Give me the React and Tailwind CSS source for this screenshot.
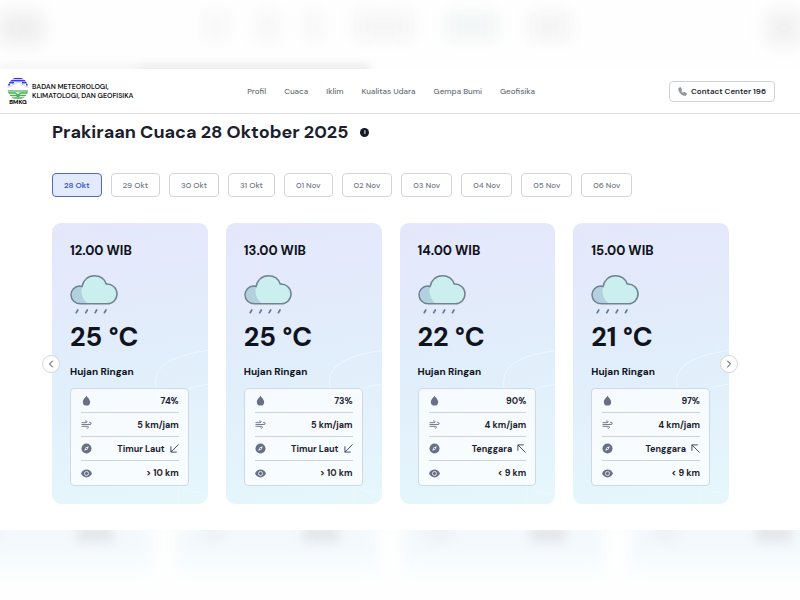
import { useState } from "react";
import { ChevronLeft, ChevronRight, Wind } from "lucide-react";

const NAV = ["Profil", "Cuaca", "Iklim", "Kualitas Udara", "Gempa Bumi", "Geofisika"];
const DAYS = ["28 Okt", "29 Okt", "30 Okt", "31 Okt", "01 Nov", "02 Nov", "03 Nov", "04 Nov", "05 Nov", "06 Nov"];
const HOURS = [
  { time: "12.00", temp: 25, humidity: "74%", wind: "5 km/jam", from: "Timur Laut", arrow: "sw", sight: "> 10 km" },
  { time: "13.00", temp: 25, humidity: "73%", wind: "5 km/jam", from: "Timur Laut", arrow: "sw", sight: "> 10 km" },
  { time: "14.00", temp: 22, humidity: "90%", wind: "4 km/jam", from: "Tenggara", arrow: "nw", sight: "< 9 km" },
  { time: "15.00", temp: 21, humidity: "97%", wind: "4 km/jam", from: "Tenggara", arrow: "nw", sight: "< 9 km" },
];

function Logo() {
  return (
    <div className="flex w-[22px] flex-col items-center">
      <svg viewBox="0 0 22 23" className="h-[23px] w-[22px]" aria-hidden="true">
        <defs>
          <clipPath id="globe"><ellipse cx="11" cy="11.500" rx="10.500" ry="11" /></clipPath>
        </defs>
        <g clipPath="url(#globe)">
          <rect width="22" height="23" fill="#fff" />
          <path d="M5 1.500h12M3 3.700h16M1 5.800h6M15 5.800h6M0 7.800h3M19 7.800h3" stroke="#3a3ae0" strokeWidth="1.400" />
          <path d="M0 10.500C5 10 7 5.500 11 5.500S17 10 22 10.500" fill="none" stroke="#c5c9f5" />
          <path d="M0 13h22v2.500H0z" fill="#8fce97" />
          <path d="M0 16h8l3 2 3-2h8M2 18.500h7l2 1 2-1h7M4 21h14" fill="none" stroke="#4fae5c" strokeWidth="1.400" />
        </g>
      </svg>
      <span className="text-[6px] leading-[5px] font-bold text-black">BMKG</span>
    </div>
  );
}

function PhoneIcon() {
  return (
    <svg viewBox="0 0 24 24" className="size-[9px]" fill="#9a9ca3" stroke="#6f727a" strokeWidth="1.500" aria-hidden="true">
      <path d="M3 2.500 7 1.500 10 8 7.500 10.500c1.500 2.800 3.200 4.500 6 6L16 14l6.500 3-1 4.500c-.5.700-1.500 1-2.500 1C10 22 2 14 2 5c0-1 .3-2 1-2.500z" />
    </svg>
  );
}

function RainCloud() {
  return (
    <svg viewBox="0 0 48 41" className="h-[41px] w-12" aria-hidden="true">
      <path d="M10.500 29.800C5 29.800 1 26 1 20.800 1 16 4.800 12.300 9.500 12.100c.9 0 1.800.1 2.500.4C13.200 6 18 1.800 24.300 1.800c5.700 0 10.300 3.300 12 8.300 6-.3 10.700 4.100 10.700 9.700 0 5.700-4.300 10-9.700 10z" fill="#cbeeee" />
      <path d="M10.500 29.800C5 29.800 1 26 1 20.800 1 16 4.800 12.300 9.500 12.100c.9 0 1.800.1 2.500.4-1.500 7 .5 13 6 17.300z" fill="#b3d0e0" />
      <path d="M10.500 29.800C5 29.800 1 26 1 20.800 1 16 4.800 12.300 9.500 12.100c.9 0 1.800.1 2.500.4C13.200 6 18 1.800 24.300 1.800c5.700 0 10.300 3.300 12 8.300 6-.3 10.700 4.100 10.700 9.700 0 5.700-4.300 10-9.700 10z" fill="none" stroke="#6f8292" strokeWidth="1.500" />
      <path d="m7.800 36-1.600 2.700M17.300 36l-1.600 2.700M26.700 36l-1.600 2.700M36 36l-1.600 2.700" stroke="#667c93" strokeWidth="1.700" strokeLinecap="round" />
    </svg>
  );
}

function Drop() {
  return (
    <svg viewBox="0 0 24 24" className="size-[11px]" fill="#687086" aria-hidden="true">
      <path d="M12 1c1 4 8 8 8 14a8 8 0 0 1-16 0C4 9 11 5 12 1z" />
    </svg>
  );
}

function Compass() {
  return (
    <svg viewBox="0 0 24 24" className="size-[11px]" aria-hidden="true">
      <circle cx="12" cy="12" r="11" fill="#687086" />
      <path d="m17 7-3 7-7 3 3-7z" fill="#f3f8fd" />
      <circle cx="12" cy="12" r="1.500" fill="#687086" />
    </svg>
  );
}

function Eye() {
  return (
    <svg viewBox="0 0 24 24" className="size-[11px]" aria-hidden="true">
      <path d="M0 12c2-5 7-8.500 12-8.500S22 7 24 12c-2 5-7 8.500-12 8.500S2 17 0 12z" fill="#687086" />
      <circle cx="12" cy="12" r="4.500" fill="none" stroke="#eef4fb" strokeWidth="1.800" />
    </svg>
  );
}

function WindArrow({ to }) {
  return (
    <svg viewBox="0 0 10 10" className="size-[9px]" fill="none" stroke="#343b4a" aria-hidden="true">
      <path d={to === "sw" ? "M9.500.5 1 9M1 2.500V9h6.500" : "M9.500 9.500 1 1M1 7.500V1h6.500"} />
    </svg>
  );
}

function Row({ icon, label, children }) {
  return (
    <div className="flex h-6 items-center justify-between">
      <dt className="flex" aria-label={label}>{icon}</dt>
      <dd className="flex items-center gap-[5px] whitespace-nowrap">{children}</dd>
    </div>
  );
}

function HourCard({ hour }) {
  return (
    <article className="relative overflow-hidden rounded-[9px] bg-linear-170 from-[#e5e7fb] via-[#e1eefb] to-[#e6f7fc] px-[18px] py-[18px] text-[#10131c]">
      <svg viewBox="0 0 156 280" className="absolute inset-0 size-full" fill="none" stroke="#eef8fd" aria-hidden="true">
        <path d="M156 127c-22 3-50 10-52 28-2 14 6 26 14 36s10 20 8 40c-2 18-1 35 18 38 6 1 10 2 12 8M156 161c-20 2-32 8-34 22s8 30 6 60l-1 37" />
      </svg>
      <div className="relative">
        <h2 className="text-[13px] leading-[20px] font-extrabold">{hour.time} WIB</h2>
        <div className="mt-[13px]"><RainCloud /></div>
        <p className="mt-[6px] text-[27px] leading-[32px] font-bold whitespace-nowrap">{hour.temp} °C</p>
        <p className="mt-[11px] text-[10px] leading-[16px] font-bold">Hujan Ringan</p>
        <dl className="mt-2 mr-px divide-y divide-[#cfd3dd] rounded-[4px] border border-[#cfd8e4] bg-white/70 pr-[9px] pl-[10px] text-[9px] leading-[12px] font-bold text-[#1d2230]">
          <Row icon={<Drop />} label="Kelembapan">{hour.humidity}</Row>
          <Row icon={<Wind className="size-[11px] text-[#687086]" />} label="Kecepatan angin">{hour.wind}</Row>
          <Row icon={<Compass />} label="Arah angin">{hour.from}<WindArrow to={hour.arrow} /></Row>
          <Row icon={<Eye />} label="Jarak pandang">{hour.sight}</Row>
        </dl>
      </div>
    </article>
  );
}

function TopHaze() {
  return (
    <div className="relative h-[69px] overflow-hidden bg-[#fefefe]" aria-hidden="true">
      <div className="flex h-full items-start pt-3 blur-[8px]">
        <div className="h-8 w-11 rounded-r-lg bg-[#efefef]" />
        <div className="ml-[160px] h-7 w-6 bg-[#f7f7f7]" />
        <div className="ml-[28px] h-7 w-6 bg-[#f7f7f7]" />
        <div className="ml-[26px] h-7 w-4 bg-[#f6f6f6]" />
        <div className="ml-[32px] h-7 w-[60px] bg-[#f6f6f6]" />
        <div className="ml-[32px] h-7 w-[52px] bg-[#f3f6f6]" />
        <div className="ml-[32px] h-7 w-10 bg-[#f4f4f4]" />
        <div className="ml-auto h-8 w-8 bg-[#f0f0f0]" />
      </div>
      <div className="absolute bottom-[-4px] left-0 flex h-2 w-[370px] blur-[4px]">
        <div className="w-[140px] bg-[#f2f2f2]" />
        <div className="flex-1 bg-[#e7e7e7]" />
      </div>
    </div>
  );
}

function BottomHaze() {
  return (
    <div className="h-[70px] overflow-hidden bg-[#fefefe]" aria-hidden="true">
      <div className="-mr-[30px] -ml-[50px] grid grid-cols-4 gap-[26px] blur-[6px]">
        {HOURS.map((hour) => (
          <div key={hour.time} className="-mt-5 flex h-[66px] justify-between bg-linear-to-b from-[#f4f9fd] from-60% to-[#f9feff] pt-4 pr-[38px] pl-6">
            <div className="h-4 w-6 bg-[#eef1f5]" />
            <div className="h-4 w-9 bg-[#e3e5e8]" />
          </div>
        ))}
      </div>
    </div>
  );
}

export default function App() {
  const [day, setDay] = useState(DAYS[0]);
  return (
    <div className="min-h-screen overflow-hidden bg-[#fefefe] font-['DM_Sans','Inter',sans-serif]">
      <TopHaze />
      <header className="flex h-[45px] items-center justify-between border-b border-[#dcdee2] bg-white pr-[25px] pl-[7px]">
        <a href="#beranda" className="flex w-[240px] items-center gap-[3px] text-[7px] leading-[9px] font-semibold whitespace-nowrap text-[#15171d]">
          <Logo />
          <span>BADAN METEOROLOGI,<br />KLIMATOLOGI, DAN GEOFISIKA</span>
        </a>
        <nav className="flex gap-[18px] text-[8px] leading-[12px] font-medium whitespace-nowrap text-[#686e7a]">
          {NAV.map((item) => <a key={item} href={"#" + item}>{item}</a>)}
        </nav>
        <div className="flex w-[240px] justify-end">
          <button className="flex h-[21px] items-center gap-1 rounded-[4px] border border-[#cfd2d8] bg-white px-2 text-[8px] leading-[12px] font-semibold whitespace-nowrap text-[#222631]">
            <PhoneIcon />Contact Center 196
          </button>
        </div>
      </header>

      <main className="bg-white pt-[6px] pr-[71px] pb-[26px] pl-[52px]">
        <div className="flex items-center gap-3">
          <h1 className="text-[18px] leading-[24px] font-bold whitespace-nowrap text-[#1a202c]">Prakiraan Cuaca 28 Oktober 2025</h1>
          <button aria-label="Informasi" className="flex size-[9px] items-center justify-center rounded-full bg-[#141a26] text-[6px] leading-none font-bold text-white">i</button>
        </div>

        <div className="mt-[29px] flex gap-[9px]">
          {DAYS.map((item) => (
            <button
              key={item}
              onClick={() => setDay(item)}
              aria-pressed={item === day}
              className={
                "h-6 rounded-[4px] border px-[11px] text-[8px] leading-[12px] whitespace-nowrap " +
                (item === day
                  ? "border-[#5068c8] bg-[#e3eafc] font-semibold text-[#3d57c8]"
                  : "border-[#d3d5da] bg-white font-medium text-[#747986]")
              }
            >
              {item}
            </button>
          ))}
        </div>

        <section className="relative mt-[26px]" aria-label="Prakiraan per jam">
          <div className="grid grid-cols-4 gap-[18px]">
            {HOURS.map((hour) => <HourCard key={hour.time} hour={hour} />)}
          </div>
          <button aria-label="Sebelumnya" className="absolute top-1/2 -left-[10px] flex size-[18px] -translate-y-1/2 items-center justify-center rounded-full border border-[#d4d6dc] bg-white text-[#333a48]">
            <ChevronLeft className="size-3" />
          </button>
          <button aria-label="Berikutnya" className="absolute top-1/2 -right-[9px] flex size-[18px] -translate-y-1/2 items-center justify-center rounded-full border border-[#d4d6dc] bg-white text-[#333a48]">
            <ChevronRight className="size-3" />
          </button>
        </section>
      </main>
      <BottomHaze />
    </div>
  );
}
